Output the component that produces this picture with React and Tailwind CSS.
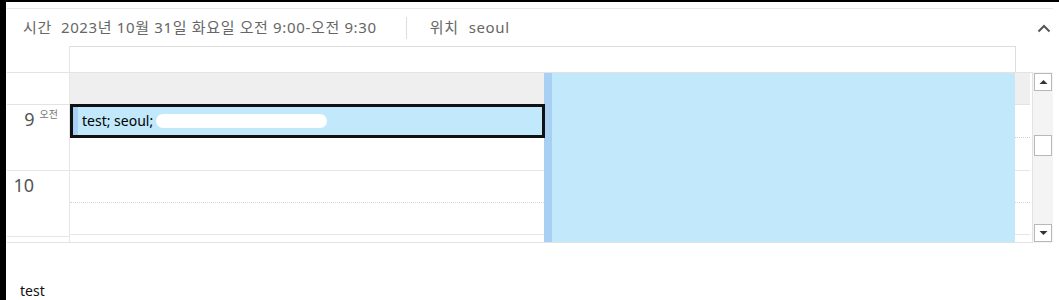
import React from 'react';

const font = { fontFamily: '"Noto Sans", "Noto Sans CJK KR", sans-serif' };

const HourLabel = ({ hour, suffix }) => (
    <div className="h-[66px] border-b border-[#e6e6e6] flex flex-row justify-end pr-[11px] pt-[2px] text-[#555]">
        <span className="text-[18px] leading-[24px]">{hour}</span>
        {suffix && <span className="text-[10px] leading-[14px] ml-[5px] text-[#777]">{suffix}</span>}
        {!suffix && <span className="w-[24px]" />}
    </div>
);

const SlotRows = () => (
    <div className="flex flex-col">
        <div className="h-[32px] bg-[#efefef] border-b border-[#e3e3e3]" />
        <div className="h-[33px] border-b border-dotted border-[#cfcfcf]" />
        <div className="h-[33px] border-b border-[#e6e6e6]" />
        <div className="h-[32px] border-b border-dotted border-[#d6d6d6]" />
        <div className="h-[32px] border-b border-[#e6e6e6]" />
        <div className="h-[8px]" />
    </div>
);

const ScrollBtn = ({ dir }) => (
    <div className="w-[18px] h-[18px] bg-white border border-[#b8b8b8] flex items-center justify-center">
        <svg width="9" height="6" viewBox="0 0 9 6">
            {dir === 'up' ? <polygon points="0.5,5 4.5,1 8.5,5" fill="#333" /> : <polygon points="0.5,1 4.5,5 8.5,1" fill="#333" />}
        </svg>
    </div>
);

export default function App() {
    return (
        <div className="w-[1059px] h-[300px] bg-black overflow-hidden" style={font}>
            <div className="ml-[6px] mt-[2px] h-[298px] bg-white pt-[6px]">
                <div className="ml-[1px] w-[1046px] border-t border-[#e8e8e8]" />

                <div className="h-[37px] flex flex-row items-center pl-[17px] pr-[8px] text-[15px] tracking-[0.65px] text-[#666]">
                    <span>시간</span>
                    <span className="ml-[9px]">2023년 10월 31일 화요일 오전 9:00-오전 9:30</span>
                    <span className="ml-[29px] h-[22px] border-l border-[#ddd]" />
                    <span className="ml-[23px]">위치</span>
                    <span className="ml-[10px]">seoul</span>
                    <svg className="ml-auto mt-[2px]" width="14" height="9" viewBox="0 0 14 9">
                        <polyline points="1.5,7.5 7,2 12.5,7.5" fill="none" stroke="#555" strokeWidth="2" />
                    </svg>
                </div>

                <div className="flex flex-row ml-[1px]">
                    <div className="w-[63px] border-r border-[#e6e6e6] h-[26px]" />
                    <div className="w-[946px] h-[26px] border-t border-r border-[#dcdcdc]" />
                </div>

                <div className="flex flex-row ml-[1px]">
                    <div className="w-[1025px] flex flex-row border-t border-b border-[#e3e3e3] h-[171px] overflow-hidden">
                        <div className="w-[63px] border-r border-[#e6e6e6] flex flex-col">
                            <div className="h-[32px] border-b border-[#e3e3e3]" />
                            <HourLabel hour="9" suffix="오전" />
                            <HourLabel hour="10" />
                        </div>

                        <div className="w-[474px] relative">
                            <SlotRows />
                            <div className="absolute left-0 top-[31px] w-[475px] h-[34px] border-[3px] border-[#111] bg-[#c1e8fb] flex flex-row items-center">
                                <div className="w-[5px] h-full bg-[#a8d0f2]" />
                                <span className="ml-[4px] text-[14px] text-black leading-none">test; seoul;</span>
                                <span className="ml-[3px] w-[171px] h-[14px] rounded-full bg-white" />
                            </div>
                        </div>

                        <div className="w-[471px] flex flex-row">
                            <div className="w-[8px] bg-[#a9d0f3]" />
                            <div className="flex-1 bg-[#c1e8fb]" />
                        </div>

                        <div className="w-[15px]">
                            <SlotRows />
                        </div>
                    </div>

                    <div className="w-[21px] h-[171px] bg-[#f4f4f4] border-l border-[#e3e3e3] flex flex-col items-center pt-[1px]">
                        <ScrollBtn dir="up" />
                        <div className="mt-[44px] w-[18px] h-[21px] bg-white border border-[#b8b8b8]" />
                        <div className="mt-auto mb-[1px]">
                            <ScrollBtn dir="down" />
                        </div>
                    </div>
                </div>

                <div className="pl-[14px] pt-[37px] text-[14px] text-[#111]">test</div>
            </div>
        </div>
    );
}
